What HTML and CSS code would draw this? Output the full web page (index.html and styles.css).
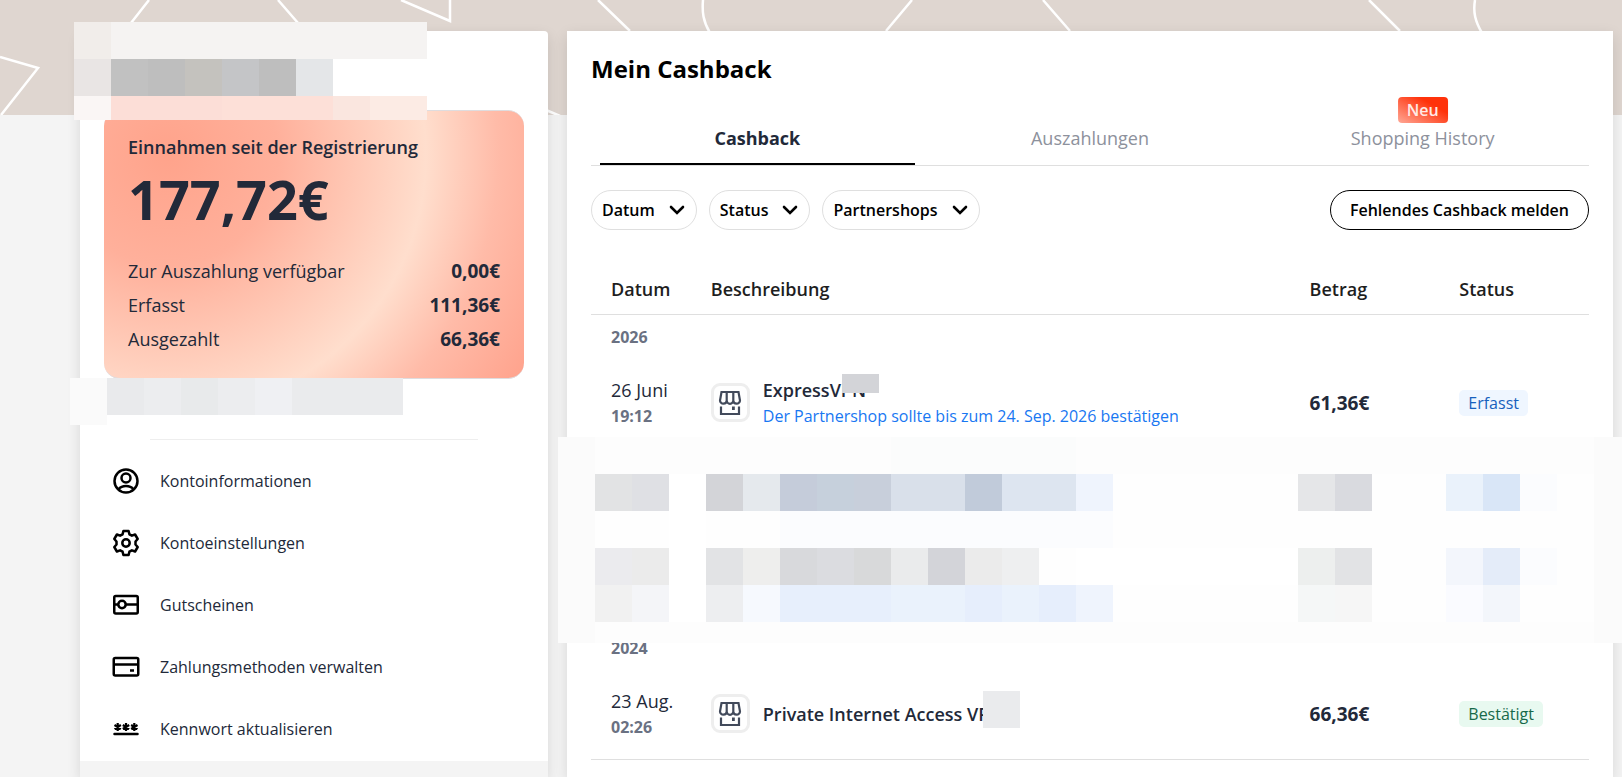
FILE: index.html
```html
<!DOCTYPE html>
<html lang="de">
<head>
<meta charset="utf-8">
<meta name="viewport" content="width=device-width, initial-scale=1">
<title>Mein Cashback</title>
<link rel="stylesheet" href="styles.css">
</head>
<body>
<svg width="0" height="0" class="defs" aria-hidden="true">
  <symbol id="shop" viewBox="0 0 24 26">
    <path d="M3.500 2h17l1.500 8.500a3.300 3.300 0 0 1-3.400 3.200a3.300 3.300 0 0 1-3.300-3.200a3.300 3.300 0 0 1-6.600 0a3.300 3.300 0 0 1-3.300 3.200a3.300 3.300 0 0 1-3.400-3.200zM8.700 2v8.500M15.300 2v8.500M3 16.500v7.500h18v-7.500" fill="none" stroke="currentColor" stroke-width="2.200"/>
    <path d="M14 16.500h2.800v3.500h-2.800z" fill="currentColor"/>
  </symbol>
  <symbol id="chevron" viewBox="0 0 16 10">
    <path d="M2 2l6 6 6-6" fill="none" stroke="currentColor" stroke-width="2.600" stroke-linecap="round"/>
  </symbol>
</svg>
<div class="banner" aria-hidden="true">
  <svg width="1622" height="115" fill="none" stroke="#fff" stroke-width="2.500">
    <path d="M0 57l38 11L1 115M149 0L131 23M278 0l20 23M401 0l49 21V0M598 0l32 31M703 0c-1 12 0 21 7 33M912 0l-26 31M1043 0l27 31M1369 0l31 31M1475 0c-2 12 0 21 7 33M546 110l14 6"/>
  </svg>
</div>
<div class="page">
  <aside class="panel side">
    <section class="balance">
      <h2 class="balance-title">Einnahmen seit der Registrierung</h2>
      <p class="balance-total">177,72€</p>
      <dl class="sums">
        <div class="sum"><dt>Zur Auszahlung verfügbar</dt><dd>0,00€</dd></div>
        <div class="sum"><dt>Erfasst</dt><dd>111,36€</dd></div>
        <div class="sum"><dt>Ausgezahlt</dt><dd>66,36€</dd></div>
      </dl>
    </section>
    <hr class="rule">
    <nav class="menu">
      <a href="#"><svg width="28" height="28" viewBox="0 0 28 28" fill="none" stroke="#000" stroke-width="2.500"><circle cx="14" cy="14" r="11.500"/><circle cx="14" cy="11" r="4.500"/><path d="M6.500 22.300c3.500-4.300 11.500-4.300 15 0"/></svg>Kontoinformationen</a>
      <a href="#"><svg width="28" height="28" viewBox="0 0 28 28" fill="none" stroke="#000" stroke-width="2.500" stroke-linejoin="round"><circle cx="14" cy="14" r="3.700"/><path d="M11.400 2h5.200l.8 3.300 2.500 1.400 3.200-1.200 2.600 4.500-2.200 2.500v3l2.200 2.500-2.600 4.500-3.200-1.200-2.500 1.400-.8 3.300h-5.200l-.8-3.300-2.500-1.400-3.200 1.200L2.300 18l2.200-2.500v-3L2.300 10l2.600-4.500 3.200 1.200 2.500-1.400z"/></svg>Kontoeinstellungen</a>
      <a href="#"><svg width="28" height="28" viewBox="0 0 28 28" fill="none" stroke="#000" stroke-width="2.500"><rect x="2.250" y="5" width="23.500" height="17.500" rx="1.500"/><circle cx="10" cy="13.500" r="3.700"/><path d="M2 13.500h4M14 13.500h12"/></svg>Gutscheinen</a>
      <a href="#"><svg width="28" height="28" viewBox="0 0 28 28" fill="none" stroke="#000" stroke-width="2.500"><rect x="1.750" y="5" width="24.500" height="17.500" rx="1.500"/><path d="M2 11.500h24M18 17.500h4"/></svg>Zahlungsmethoden verwalten</a>
      <a href="#"><svg width="28" height="28" viewBox="0 0 28 28" fill="none" stroke="#000" stroke-width="2.200"><path d="M2.500 19h23" stroke-width="2.500" stroke-linecap="round"/><path d="M5.700 8v8M2.500 10l6.400 4M8.900 10l-6.400 4M14 8v8M10.800 10l6.400 4M17.200 10l-6.400 4M22.300 8v8M19.100 10l6.400 4M25.500 10l-6.400 4"/></svg>Kennwort aktualisieren</a>
    </nav>
    <div class="side-end"></div>
    <svg class="mask mask-name" width="353" height="98" shape-rendering="crispEdges" aria-hidden="true">
      <path fill="#f1edea" d="M0 0h37v37H0z"/><path fill="#f5f3f2" d="M37 0h316v37H37z"/>
      <path fill="#e9e5e4" d="M0 37h37v37H0z"/><path fill="#c1c1c1" d="M37 37h37v37H37z"/><path fill="#bebebe" d="M74 37h37v37H74z"/><path fill="#c4c2be" d="M111 37h37v37h-37z"/><path fill="#c4c5c7" d="M148 37h37v37h-37z"/><path fill="#bebebe" d="M185 37h37v37h-37z"/><path fill="#e4e6e8" d="M222 37h37v37h-37z"/><path fill="#fff" d="M259 37h94v37h-94z"/>
      <path fill="#faf6f5" d="M0 74h37v24H0z"/><path fill="#fcded7" d="M37 74h111v24H37z"/><path fill="#fde0d8" d="M148 74h111v24H148z"/><path fill="#fae6df" d="M259 74h37v24h-37z"/><path fill="#fcebe4" d="M296 74h57v24h-57z"/>
    </svg>
    <svg class="mask mask-note" width="333" height="47" shape-rendering="crispEdges" aria-hidden="true">
      <path fill="#fafafa" d="M0 0h37v47H0z"/><path fill="#e9eaec" d="M37 0h37v37H37z"/><path fill="#ecedef" d="M74 0h37v37H74z"/><path fill="#e8eaeb" d="M111 0h37v37h-37z"/><path fill="#ecedef" d="M148 0h37v37h-37z"/><path fill="#eff0f3" d="M185 0h37v37h-37z"/><path fill="#eaebed" d="M222 0h111v37H222z"/>
    </svg>
  </aside>
  <main class="panel main">
    <h1 class="title">Mein Cashback</h1>
    <nav class="tabs">
      <a href="#" class="tab active">Cashback</a>
      <a href="#" class="tab">Auszahlungen</a>
      <a href="#" class="tab">Shopping History<span class="new">Neu</span></a>
    </nav>
    <div class="filters">
      <button type="button" class="pill">Datum<svg width="16" height="10"><use href="#chevron"/></svg></button>
      <button type="button" class="pill">Status<svg width="16" height="10"><use href="#chevron"/></svg></button>
      <button type="button" class="pill">Partnershops<svg width="16" height="10"><use href="#chevron"/></svg></button>
      <button type="button" class="pill report">Fehlendes Cashback melden</button>
    </div>
    <div class="ledger">
      <table>
        <colgroup><col class="c-date"><col class="c-desc"><col class="c-sum"><col class="c-sum"></colgroup>
        <thead><tr><th scope="col">Datum</th><th scope="col">Beschreibung</th><th scope="col">Betrag</th><th scope="col">Status</th></tr></thead>
        <tbody>
          <tr class="year"><th colspan="4">2026</th></tr>
          <tr class="entry">
            <td><span class="day">26 Juni</span><span class="time">19:12</span></td>
            <td><div class="shop"><span class="logo"><svg width="24" height="26"><use href="#shop"/></svg></span><div><span class="name">ExpressVPN<i class="cover cover-a"></i></span><span class="hint">Der Partnershop sollte bis zum 24. Sep. 2026 bestätigen</span></div></div></td>
            <td class="amount">61,36€</td>
            <td><span class="badge blue">Erfasst</span></td>
          </tr>
          <tr class="hidden-entry"><td colspan="4"></td></tr>
          <tr class="hidden-entry"><td colspan="4"></td></tr>
          <tr class="year"><th colspan="4">2024</th></tr>
          <tr class="entry">
            <td><span class="day">23 Aug.</span><span class="time">02:26</span></td>
            <td><div class="shop"><span class="logo"><svg width="24" height="26"><use href="#shop"/></svg></span><div><span class="name">Private Internet Access VPN<i class="cover cover-b"></i></span></div></div></td>
            <td class="amount">66,36€</td>
            <td><span class="badge green">Bestätigt</span></td>
          </tr>
        </tbody>
      </table>
      <svg class="mask mask-rows" width="1064" height="206" shape-rendering="crispEdges" aria-hidden="true">
        <path fill="#fefefe" d="M0 0h1064v206H0z"/>
        <path fill="#fbfbfb" d="M0 0h37v206H0zM1036 0h28v206h-28z"/>
        <path fill="#fdfdfd" d="M37 0h999v37H37zM37 185h999v21H37z"/>
        <path fill="#fbfcfc" d="M333 0h185v37H333z"/>
        <path fill="#fff" d="M111 37h37v148h-37zM518 111h222v37H518z"/>
        <path fill="#fbfcfe" d="M222 74h333v37H222z"/>
        <!-- upper line -->
        <path fill="#e2e3e4" d="M37 37h37v37H37z"/><path fill="#dfe0e4" d="M74 37h37v37H74z"/>
        <path fill="#d3d4d8" d="M148 37h37v37h-37z"/><path fill="#e5e9ed" d="M185 37h37v37h-37z"/>
        <path fill="#c5ccda" d="M222 37h37v37h-37z"/><path fill="#c6d0dc" d="M259 37h37v37h-37z"/><path fill="#c8cfdb" d="M296 37h37v37h-37z"/>
        <path fill="#d9e0ea" d="M333 37h74v37h-74z"/><path fill="#c1cbda" d="M407 37h37v37h-37z"/><path fill="#dde5f0" d="M444 37h74v37h-74z"/><path fill="#eff4fd" d="M518 37h37v37h-37z"/>
        <path fill="#e5e6e8" d="M740 37h37v37h-37z"/><path fill="#d9dadf" d="M777 37h37v37h-37z"/>
        <path fill="#eaf2fb" d="M888 37h37v37h-37z"/><path fill="#d9e6f7" d="M925 37h37v37h-37z"/><path fill="#fbfcfe" d="M962 37h37v37h-37zM962 111h37v37h-37z"/>
        <!-- middle line -->
        <path fill="#ebebee" d="M37 111h37v37H37z"/><path fill="#ebebeb" d="M74 111h37v37H74z"/>
        <path fill="#e2e3e5" d="M148 111h37v37h-37z"/><path fill="#eeeeed" d="M185 111h37v37h-37z"/>
        <path fill="#d8d9dc" d="M222 111h37v37h-37z"/><path fill="#dbdce0" d="M259 111h37v37h-37z"/><path fill="#d8d9da" d="M296 111h37v37h-37z"/>
        <path fill="#eaebec" d="M333 111h37v37h-37z"/><path fill="#d3d4d9" d="M370 111h37v37h-37z"/><path fill="#ebebeb" d="M407 111h37v37h-37z"/><path fill="#eeeff0" d="M444 111h37v37h-37z"/>
        <path fill="#edefee" d="M740 111h37v37h-37z"/><path fill="#e2e3e5" d="M777 111h37v37h-37z"/>
        <path fill="#f3f6fc" d="M888 111h37v37h-37z"/><path fill="#e4ecf9" d="M925 111h37v37h-37z"/>
        <!-- lower line -->
        <path fill="#f1f1f1" d="M37 148h37v37H37z"/><path fill="#f4f5f8" d="M74 148h37v37H74z"/>
        <path fill="#edeef0" d="M148 148h37v37h-37z"/><path fill="#f6f9fe" d="M185 148h37v37h-37z"/>
        <path fill="#e7effc" d="M222 148h111v37H222z"/><path fill="#eaf2fc" d="M333 148h74v37h-74zM444 148h37v37h-37z"/><path fill="#e6eefc" d="M407 148h37v37h-37zM481 148h37v37h-37z"/><path fill="#eff4fd" d="M518 148h37v37h-37z"/>
        <path fill="#f5f7f7" d="M740 148h37v37h-37z"/><path fill="#f6f6f6" d="M777 148h37v37h-37z"/>
        <path fill="#fafbff" d="M888 148h37v37h-37z"/><path fill="#f3f6fb" d="M925 148h37v37h-37z"/>
      </svg>
    </div>
  </main>
</div>
</body>
</html>
```
FILE: styles.css
```css
* { box-sizing: border-box; }
body {
  margin: 0;
  position: relative;
  min-height: 100vh;
  overflow: hidden;
  background: #f4f4f4;
  color: #222939;
  font-family: "Open Sans", "Noto Sans", sans-serif;
  font-size: 16px;
  line-height: 24px;
}
h1, h2, p, dl, dd { margin: 0; }
a { color: inherit; text-decoration: none; }
svg { flex: none; }
.defs, .banner, .mask { position: absolute; }
.banner { top: 0; left: 0; right: 0; height: 115px; background: #dfd6d0; overflow: hidden; }
.banner svg { display: block; }

.page {
  position: relative;
  display: grid;
  grid-template-columns: minmax(0, 468fr) minmax(0, 1046fr);
  gap: 19px;
  padding: 31px 9px 0 80px;
  min-height: 100vh;
}
.panel { position: relative; background: #fff; box-shadow: 0 5px 14px rgba(0, 0, 0, .12); }

.side { display: flex; flex-direction: column; padding-top: 79px; border-radius: 4px 4px 0 0; }
.balance {
  margin: 0 24px;
  padding: 23px 24px 22px;
  border: solid #dfdcde;
  border-width: 1px 0;
  border-radius: 16px;
  background: radial-gradient(circle at 64px 44px, #ffa38b 0, #ffb09b 110px, #ffdecd 258px, #ffbba8 330px, #ffa28c 420px);
}
.balance-title { font-size: 18px; line-height: 26px; font-weight: 600; }
.balance-total { font-size: 54px; line-height: 66px; font-weight: 700; margin: 6px 0 22px; }
.sum { display: flex; justify-content: space-between; font-size: 18px; line-height: 34px; }
.sum dd { font-size: 19px; font-weight: 700; }
.rule { width: 70%; margin: 60px auto 10px; border: 0; border-top: 1px solid #eee; }
.menu { padding-bottom: 1px; }
.menu a { display: flex; align-items: center; gap: 20px; height: 62px; padding-left: 32px; }
.side-end { flex: 1; background: #f4f4f4; }
.mask-name { left: -6px; top: -9px; }
.mask-note { left: -10px; top: 347px; }

.main { padding: 20px 24px 0; }
.title { color: #000; font-size: 24px; line-height: 36px; font-weight: 700; }
.tabs { display: grid; grid-template-columns: repeat(3, 1fr); margin-top: 32px; border-bottom: 1px solid #dfdfdf; }
.tab { position: relative; margin: 0 9px; height: 46px; padding-top: 7px; text-align: center; color: #8d919c; font-size: 18px; }
.tab.active { color: #222939; font-weight: 700; border-bottom: 2px solid #000; }
.new {
  position: absolute;
  bottom: 100%;
  left: 50%;
  translate: -50% 4px;
  padding: 0 9px;
  border-radius: 4px;
  background: linear-gradient(30deg, #ffa896, #ff320a 70%);
  color: #ffeae5;
  font-size: 16px;
  line-height: 26px;
  font-weight: 600;
}
.filters { display: flex; gap: 12px; margin-top: 24px; }
.pill {
  display: flex;
  align-items: center;
  gap: 14px;
  height: 40px;
  padding: 0 11px 0 10px;
  border: 1px solid #dfdfdf;
  border-radius: 20px;
  background: #fff;
  color: #000;
  font: 600 16px/24px "Open Sans", "Noto Sans", sans-serif;
}
.report { margin-left: auto; padding: 0 19px; border-color: #000; }

.ledger { position: relative; margin-top: 36px; }
table { width: 100%; table-layout: fixed; border-collapse: separate; border-spacing: 0; padding-bottom: 2px; border-bottom: 1px solid #dfdfdf; }
.c-date { width: 10%; }
.c-desc { width: 60%; }
.c-sum { width: 15%; }
th, td { padding: 0 0 0 20px; text-align: left; }
thead th { height: 49px; padding-bottom: 3px; border-bottom: 1px solid #dfdfdf; color: #1e1e1e; font-size: 18px; font-weight: 600; }
.year th { height: 44px; padding-bottom: 1px; color: #6a7182; font-weight: 700; }
.entry td { height: 87px; }
.hidden-entry td { height: 90px; }
.day, .time, .name, .hint { display: block; line-height: 26px; white-space: nowrap; }
.day { font-size: 18px; }
.time { color: #6a7182; font-weight: 700; }
.shop { display: flex; align-items: center; gap: 13px; }
.logo { flex: none; display: grid; place-items: center; width: 39px; height: 39px; border: 3px solid #eee; border-radius: 9px; color: #424a5b; }
.name { position: relative; width: max-content; font-size: 18px; font-weight: 600; }
.hint { color: #1877f2; }
.amount { font-size: 19px; font-weight: 700; }
.badge { display: inline-block; padding: 0 9px; border-radius: 5px; line-height: 26px; font-weight: 500; }
.blue { background: #eff6ff; color: #1660bd; }
.green { background: #e8f9f0; color: #17694a; }
.cover { position: absolute; width: 37px; }
.cover-a { left: 79px; top: -3px; height: 19px; background: #d3d4d8; }
.cover-b { left: 220px; top: -10px; height: 37px; background: #eaebed; }
.mask-rows { left: -33px; top: 171px; }
```
